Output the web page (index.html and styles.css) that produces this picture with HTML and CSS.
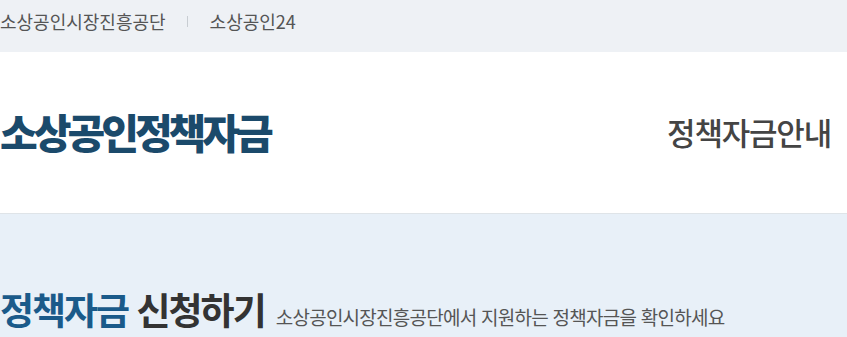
FILE: index.html
```html
<!DOCTYPE html>
<html lang="ko">
<head>
<meta charset="utf-8">
<title>소상공인정책자금</title>
<link rel="stylesheet" href="styles.css">
</head>
<body>
<div class="topbar">
  <a class="toplink">소상공인시장진흥공단</a>
  <span class="divider"></span>
  <a class="toplink">소상공인24</a>
</div>
<header class="header">
  <h1 class="logo">소상공인정책자금</h1>
  <nav class="gnb">정책자금안내</nav>
</header>
<main class="main">
  <div class="title-row">
    <h2 class="title"><span class="accent">정책자금</span> 신청하기</h2>
    <p class="subtitle">소상공인시장진흥공단에서 지원하는 정책자금을 확인하세요</p>
  </div>
</main>
</body>
</html>
```
FILE: styles.css
```css
* { box-sizing: border-box; margin: 0; padding: 0; }
html, body { height: 100%; }
body {
  font-family: "Noto Sans CJK KR", "Noto Sans", sans-serif;
  background: #e8f0f8;
  overflow: hidden;
}
.topbar {
  height: 52px;
  background: #eef1f5;
  display: flex;
  align-items: center;
  padding-bottom: 11px;
}
.toplink {
  font-size: 18px;
  color: #555;
  letter-spacing: 0;
  text-decoration: none;
}
.divider {
  width: 1px;
  height: 11px;
  background: #c8cdd2;
  margin: 2px 22px 0 21px;
}
.header {
  height: 162px;
  background: #fff;
  border-bottom: 1px solid #dfe4e8;
  display: flex;
  justify-content: space-between;
  align-items: center;
  padding-right: 16px;
}
.logo {
  font-size: 41px;
  font-weight: 900;
  color: #1b4a6b;
  letter-spacing: -4px;
  line-height: 1;
  margin-top: -3px;
}
.gnb {
  font-size: 31px;
  font-weight: 500;
  color: #444;
  letter-spacing: -1.2px;
  line-height: 1;
  margin-top: -3px;
}
.main {
  padding-top: 73px;
}
.title-row {
  display: flex;
  align-items: baseline;
  gap: 11px;
}
.title {
  font-size: 37px;
  font-weight: 700;
  color: #333;
  letter-spacing: -2px;
  line-height: 1.2;
}
.accent { color: #1a5a8a; }
.subtitle {
  font-size: 19px;
  color: #555;
  letter-spacing: -0.75px;
}
```
